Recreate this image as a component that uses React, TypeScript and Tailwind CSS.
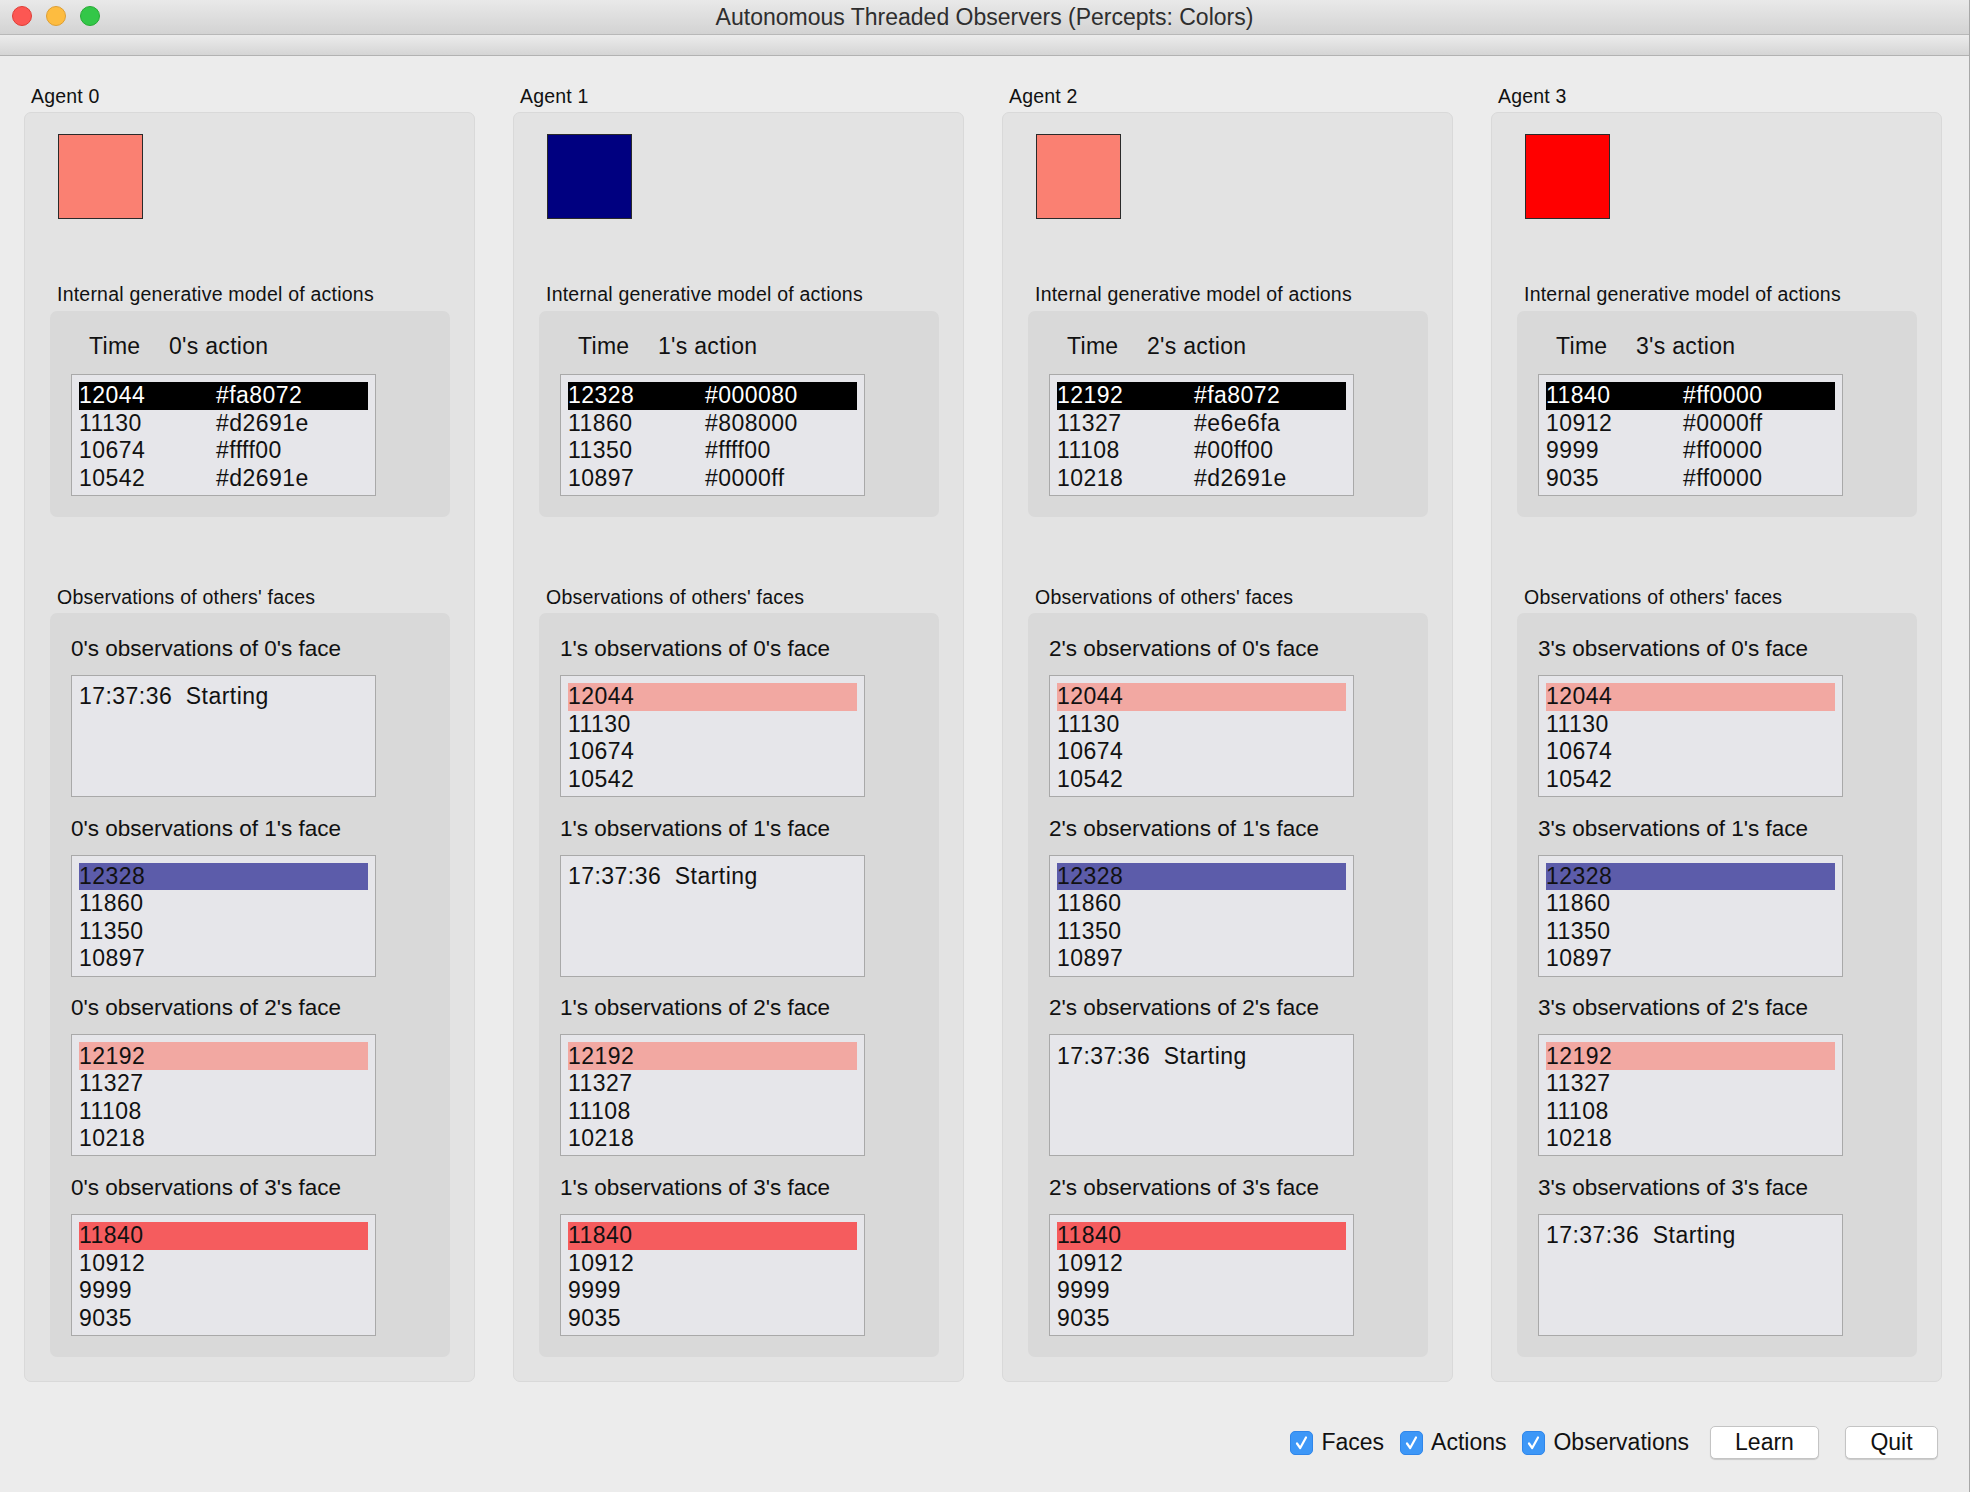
import React from "react";

type Agent = { color: string; hl: string; actions: [string, string][] };

const agents: Agent[] = [
  {
    color: "#fa8072",
    hl: "#f2a8a2",
    actions: [
      ["12044", "#fa8072"],
      ["11130", "#d2691e"],
      ["10674", "#ffff00"],
      ["10542", "#d2691e"],
    ],
  },
  {
    color: "#000080",
    hl: "#5c5caa",
    actions: [
      ["12328", "#000080"],
      ["11860", "#808000"],
      ["11350", "#ffff00"],
      ["10897", "#0000ff"],
    ],
  },
  {
    color: "#fa8072",
    hl: "#f2a8a2",
    actions: [
      ["12192", "#fa8072"],
      ["11327", "#e6e6fa"],
      ["11108", "#00ff00"],
      ["10218", "#d2691e"],
    ],
  },
  {
    color: "#ff0000",
    hl: "#f55c5e",
    actions: [
      ["11840", "#ff0000"],
      ["10912", "#0000ff"],
      ["9999", "#ff0000"],
      ["9035", "#ff0000"],
    ],
  },
];

const FONT = { fontFamily: '"Liberation Sans", Arial, Helvetica, sans-serif' };

function ListBox({ children }: { children: React.ReactNode }) {
  return (
    <div className="w-[305px] h-[122px] border border-[#a9a9a9] bg-[#e6e6ea] pt-[7px] px-[7px] overflow-hidden">
      {children}
    </div>
  );
}

function ActionsList({ agent }: { agent: Agent }) {
  return (
    <ListBox>
      {agent.actions.map(([t, c], i) => (
        <div
          key={i}
          className={
            "h-[27.5px] flex items-center text-[23px] leading-[27px] tracking-[0.45px] " +
            (i === 0 ? "bg-black text-white" : "text-[#111]")
          }
        >
          <span className="w-[137px]">{t}</span>
          <span>{c}</span>
        </div>
      ))}
    </ListBox>
  );
}

function ObsList({ observer, target }: { observer: number; target: number }) {
  if (observer === target) {
    return (
      <ListBox>
        <div className="h-[27.5px] flex items-center text-[23px] leading-[27px] tracking-[0.45px] text-[#111] whitespace-pre">
          {"17:37:36  Starting"}
        </div>
      </ListBox>
    );
  }
  const a = agents[target];
  return (
    <ListBox>
      {a.actions.map(([t], i) => (
        <div
          key={i}
          className="h-[27.5px] flex items-center text-[23px] leading-[27px] tracking-[0.45px] text-[#111]"
          style={i === 0 ? { backgroundColor: a.hl } : undefined}
        >
          {t}
        </div>
      ))}
    </ListBox>
  );
}

function AgentPanel({ idx }: { idx: number }) {
  const agent = agents[idx];
  return (
    <div className="w-[451px]">
      <div className="ml-[7px] h-[24px] leading-[24px] text-[19.5px] tracking-[0.2px] text-[#111]">Agent {idx}</div>
      <div className="mt-[4px] rounded-[7px] border border-[#d9d9d9] bg-[#e3e3e3] pl-[25px] pr-[24px] pt-[21px] pb-[24px]">
        <div
          className="ml-[8px] w-[85px] h-[85px] border border-[#2a2a2a]"
          style={{ backgroundColor: agent.color }}
        />
        <div className="mt-[63px] ml-[7px] h-[24px] leading-[24px] text-[19.5px] tracking-[0.22px] text-[#111]">
          Internal generative model of actions
        </div>
        <div className="mt-[5px] w-[400px] rounded-[7px] bg-[#d9d9d9] pt-[22px] pb-[21px] pl-[21px]">
          <div className="flex h-[27px] items-center text-[23px] leading-[27px] tracking-[0.3px] text-[#111]">
            <span className="ml-[18px] w-[80px]">Time</span>
            <span>{idx}'s action</span>
          </div>
          <div className="mt-[14px]">
            <ActionsList agent={agent} />
          </div>
        </div>
        <div className="mt-[68px] ml-[7px] h-[24px] leading-[24px] text-[19.5px] tracking-[0.22px] text-[#111]">
          Observations of others' faces
        </div>
        <div className="mt-[4px] w-[400px] rounded-[7px] bg-[#d9d9d9] pt-[22px] pb-[21px] pl-[21px] flex flex-col gap-[17.7px]">
          {[0, 1, 2, 3].map((t) => (
            <div key={t}>
              <div className="h-[27px] leading-[27px] text-[22.5px] text-[#111]">
                {idx}'s observations of {t}'s face
              </div>
              <div className="mt-[13px]">
                <ObsList observer={idx} target={t} />
              </div>
            </div>
          ))}
        </div>
      </div>
    </div>
  );
}

function Check({ label }: { label: string }) {
  return (
    <div className="flex items-center">
      <div className="w-[23px] h-[24px] rounded-[5px] bg-[#3d97f7] border border-[#2f86ea] flex items-center justify-center">
        <svg width="15" height="16" viewBox="0 0 15 16">
          <path d="M3 8.5 L6.2 13 L12 2.5" fill="none" stroke="white" strokeWidth="2.2" strokeLinecap="round" strokeLinejoin="round" />
        </svg>
      </div>
      <span className="ml-[8px] text-[23px] leading-[27px] text-[#111]">{label}</span>
    </div>
  );
}

function Button({ label, w }: { label: string; w: string }) {
  return (
    <div
      className={
        "h-[33px] rounded-[5px] bg-white border border-[#c4c4c4] shadow-[0_1px_1px_rgba(0,0,0,0.15)] flex items-center justify-center text-[23px] text-[#111] " +
        w
      }
    >
      {label}
    </div>
  );
}

export default function App() {
  return (
    <div
      className="w-[1970px] h-[1492px] overflow-hidden bg-[#ececec] border-r border-[#a8a8a8] flex flex-col"
      style={FONT}
    >
      {/* title bar */}
      <div className="relative h-[35px] shrink-0 border-b border-[#b8b8b8] bg-gradient-to-b from-[#e9e9e9] to-[#d3d3d3] flex items-center justify-center">
        <div className="absolute left-[12px] top-[6px] flex gap-[14px]">
          <div className="w-[20px] h-[20px] rounded-full bg-[#fc5753] border border-[#df3e36]" />
          <div className="w-[20px] h-[20px] rounded-full bg-[#fdbc40] border border-[#de9f33]" />
          <div className="w-[20px] h-[20px] rounded-full bg-[#33c748] border border-[#27aa35]" />
        </div>
        <div className="text-[23px] text-[#2e2e2e]">Autonomous Threaded Observers (Percepts: Colors)</div>
      </div>
      {/* toolbar band */}
      <div className="h-[21px] shrink-0 border-b border-[#b2b2b2] bg-gradient-to-b from-[#ececec] to-[#d5d5d5]" />
      {/* content */}
      <div className="pt-[28px] pl-[24px] flex gap-[38px]">
        {[0, 1, 2, 3].map((i) => (
          <AgentPanel key={i} idx={i} />
        ))}
      </div>
      <div className="mt-[44px] pr-[31px] flex items-center justify-end">
        <Check label="Faces" />
        <div className="w-[16px]" />
        <Check label="Actions" />
        <div className="w-[16px]" />
        <Check label="Observations" />
        <div className="w-[21px]" />
        <Button label="Learn" w="w-[109px]" />
        <div className="w-[26px]" />
        <Button label="Quit" w="w-[93px]" />
      </div>
    </div>
  );
}
